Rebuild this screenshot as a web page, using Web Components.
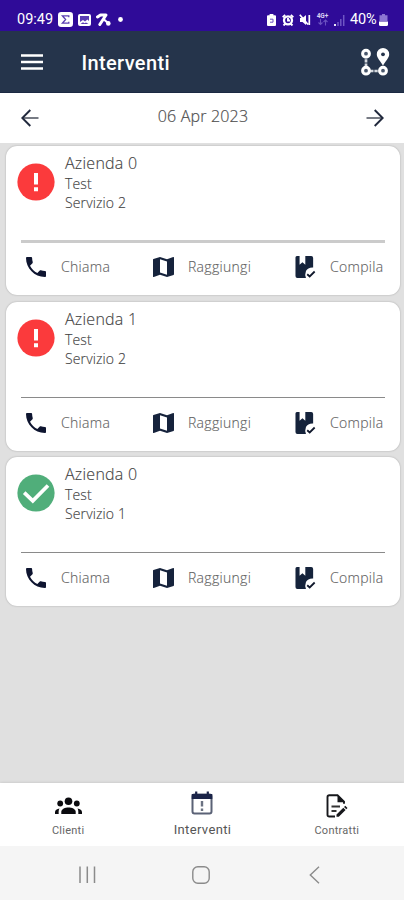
<!DOCTYPE html>
<html lang="it">
<head>
<meta charset="utf-8">
<title>Interventi</title>
<style>
html,body{margin:0;padding:0}
body{width:404px;height:900px;overflow:hidden;background:#e0e0e0;font-family:"Open Sans","Noto Sans",sans-serif}
</style>
</head>
<body>
<app-screen></app-screen>
<script>
const define = (name, html, setup) => {
  const t = document.createElement('template');
  t.innerHTML = html;
  customElements.define(name, class extends HTMLElement {
    connectedCallback() {
      if (this.shadowRoot) return;
      const root = this.attachShadow({mode: 'open'});
      root.append(t.content.cloneNode(true));
      if (setup) setup(this, root);
    }
  });
};

/* Each icon: width, height, viewBox, markup */
const ICONS = {
  sigma: [15,15,'0 0 15 15','<rect width="15" height="15" rx="3.2" fill="#fff"/><path d="M10.800 5.200V3.800H4.400L7.600 7.500 4.400 11.200h6.400V9.800" fill="none" stroke="#5c40b2" stroke-width="1.300"/>'],
  picture: [13,12,'0 0 13 12','<rect width="13" height="12" rx="2" fill="#fff"/><path d="M2 2h9v5L9.500 5.500 7 7.500 5 6 2 8z" fill="#5a3bb4"/><path d="M2.500 10h8L8 8.500 6.500 9.300 5 8.300z" fill="#5a3bb4"/>'],
  percent: [15,13,'0 0 15 13','<path d="M1.500 4L4.500 2h5.500L3.800 11.500" fill="none" stroke="#fff" stroke-width="3" stroke-linejoin="round" stroke-linecap="round"/><path d="M8 6.500l4 3.500" stroke="#fff" stroke-width="2.200" stroke-linecap="round"/><circle cx="12.300" cy="10.400" r="2.300" fill="#fff"/>'],
  dot: [5,5,'0 0 5 5','<circle cx="2.500" cy="2.500" r="2.400" fill="#fff"/>'],
  saver: [9,12,'0 0 9 12','<path d="M2.600 0h3.800v1.300H8q1 0 1 1V11q0 1-1 1H1q-1 0-1-1V2.300q0-1 1-1h1.600z" fill="#fff"/><path d="M3 5.200h3v3H3" fill="none" stroke="#6a4fc0" stroke-width="1"/>'],
  alarm: [12,12,'0 0 12 12','<circle cx="6" cy="6.300" r="4" fill="none" stroke="#fff" stroke-width="2.300"/><path d="M.7 3.200L3.200.9M11.300 3.200L8.800.9M1.500 11.500l2-2M10.500 11.500l-2-2M6 4v2.500h2" fill="none" stroke="#fff" stroke-width="1.900"/>'],
  mute: [12,12,'0 0 12 12','<path d="M1 4h2.500L7 1v10L3.500 8H1z" fill="#fff"/><path d="M.8.8L9 10.500M10.300 1v10" fill="none" stroke="#fff" stroke-width="1.700"/>'],
  net: [13,7,'0 0 13 7','<path d="M4.500 0v5.500M2.500 3.500l2 2 2-2M9.500 6.500V1M7.500 3l2-2 2 2" fill="none" stroke="#6a50c0" stroke-width="1.100"/>'],
  signal: [11,12,'0 0 11 12','<path d="M1 10v2" stroke="#fff" stroke-width="1.800"/><path d="M4 8v4M6.800 5v7M9.700 1v11" stroke="#6f56c4" stroke-width="1.500"/>'],
  battery: [9,12,'0 0 9 12','<path d="M3 0h3v1.200H8.500V7H.5V1.200H3z" fill="#8c76d2"/><path d="M0 7.500h9v3q0 1.500-1.500 1.500h-6Q0 12 0 10.500z" fill="#fff"/>'],
  menu: [22,16,'0 0 22 16','<path d="M0 1.500h22M0 8h22M0 14.500h22" stroke="#fff" stroke-width="2.300"/>'],
  route: [30,30,'0 0 30 30','<path d="M6 8v15M6 24h18" stroke="#d5d9df" stroke-width="2.700" stroke-dasharray="3.300 .9"/><g fill="#4a586d" stroke="#fff" stroke-width="3"><circle cx="6" cy="6.700" r="3.400"/><circle cx="6" cy="23.700" r="3.400"/><circle cx="23" cy="23.700" r="3.400"/></g><path d="M23 1a6.200 6.200 0 0 0-6.200 6.200c0 4 3.800 6.500 6.200 11.500 2.400-5 6.200-7.500 6.200-11.500A6.200 6.200 0 0 0 23 1z" fill="#fff"/><circle cx="23" cy="7.300" r="1.900" fill="#25344b"/>'],
  left: [18,18,'0 0 18 18','<path d="M17.500 9H2" stroke="#777b84" stroke-width="2"/><path d="M9.300 1L1.300 9l8 8" fill="none" stroke="#20283c" stroke-width="1.900"/>'],
  right: [18,18,'0 0 18 18','<path d="M.5 9H16" stroke="#777b84" stroke-width="2"/><path d="M8.700 1l8 8-8 8" fill="none" stroke="#20283c" stroke-width="1.900"/>'],
  error: [38,38,'0 0 38 38','<circle cx="19" cy="19" r="18.600" fill="#fb3a3c"/><path d="M19 10v11.500M19 24.300v3.900" stroke="#fff" stroke-width="4"/>'],
  done: [38,38,'0 0 38 38','<circle cx="19" cy="19" r="18.600" fill="#50ae7a"/><path d="M7.200 18.600l8.600 8.200L31 11.500" fill="none" stroke="#fff" stroke-width="3.700"/>'],
  phone: [20,20,'3 3 18 18','<path fill="#0e1530" d="M6.620 10.790c1.440 2.830 3.760 5.140 6.590 6.590l2.200-2.200c.27-.27.67-.36 1.020-.24 1.120.37 2.330.57 3.570.57.55 0 1 .45 1 1V20c0 .55-.45 1-1 1-9.390 0-17-7.610-17-17 0-.55.45-1 1-1h3.500c.55 0 1 .45 1 1 0 1.250.2 2.450.57 3.570.11.35.03.74-.25 1.020l-2.200 2.200z"/>'],
  map: [21,20,'3 3 18 18','<path fill="#16233c" d="M20.500 3l-.16.030L15 5.100 9 3 3.360 4.900c-.21.070-.36.250-.36.480V20.500c0 .28.220.5.500.5l.16-.03L9 18.900l6 2.100 5.640-1.900c.21-.07.360-.25.360-.48V3.500c0-.28-.22-.5-.5-.5z"/><path fill="#fff" d="M9 5l6 2.100V19l-6-2.100z"/>'],
  book: [21,24,'0 0 22 24','<path d="M2 1h2.800v8.800l3-2.600 3 2.600V1H17q2 0 2 2v9.500q-5.500-.3-7.500 3.500-1.500 3.500 0 7H2.500q-2 0-2-2V2.500Q.5 1 2 1z" fill="#15233b"/><path d="M12.800 19.200l2.600 2.300 5.200-5" fill="none" stroke="#10182c" stroke-width="1.900"/>'],
  people: [27,18,'0 0 27 18','<g fill="#0b0b0f"><circle cx="13.500" cy="4.200" r="3.800"/><circle cx="5.200" cy="6.500" r="2.900"/><circle cx="21.800" cy="6.500" r="2.900"/><path d="M6.300 17v-2.200c0-2.800 4-4.300 7.200-4.300s7.200 1.500 7.200 4.300V17z"/><path d="M0 17v-1.800c0-2 1.800-3.400 4.600-3.700-.8 1-1.100 2.200-.9 5.500zM27 17v-1.800c0-2-1.800-3.400-4.600-3.700.8 1 1.100 2.200.9 5.500z"/></g>'],
  calendar: [22,24,'0 0 22 24','<rect x="1.500" y="3.500" width="19" height="19" rx="2" fill="#fff" stroke="#5b6276" stroke-width="2"/><path d="M.7 3h20.600v5H.7z" fill="#1b2448"/><path d="M5.200.5v4M16.800.5v4" stroke="#1b2448" stroke-width="2.200"/><path d="M11 10v5.500M11 17.500v2.500" stroke="#6b7282" stroke-width="2.400"/>'],
  contract: [22,24,'0 0 22 24','<path d="M9 22.500H3.300q-1.800 0-1.800-1.800V3q0-1.800 1.800-1.800h8.200L18 7.700v2" fill="none" stroke="#17181c" stroke-width="1.900"/><path d="M11.500 1v7.200H18.500z" fill="#17181c"/><path d="M5.500 12.500h8.500M5.500 17h5" stroke="#333" stroke-width="1.900"/><path d="M10.500 22.800v-2.300l6.800-6.800 2.300 2.300-6.800 6.800zM18 13l1.300-1.200 2.200 2.200-1.200 1.300z" fill="#17181c"/>'],
  recents: [18,18,'0 0 18 18','<path d="M2 .5v16.500M9.300 .5v16.500M16.500 .5v16.500" stroke="#8b8b8b" stroke-width="1.500"/>'],
  home: [18,18,'0 0 18 18','<rect x=".8" y=".8" width="16.400" height="16.400" rx="5" fill="none" stroke="#8b8b8b" stroke-width="1.400"/>'],
  back: [11,18,'0 0 11 18','<path d="M10 .8L1.300 9l8.700 8.200" fill="none" stroke="#8b8b8b" stroke-width="1.400"/>']
};

define('ui-icon', '<style>:host{display:block;flex:none;line-height:0}svg{display:block}</style>', (el, root) => {
  const [w, h, box, body] = ICONS[el.getAttribute('name')];
  root.innerHTML += `<svg width="${w}" height="${h}" viewBox="${box}" preserveAspectRatio="none">${body}</svg>`;
});

define('status-bar', `<style>
:host{display:flex;box-sizing:border-box;height:31px;padding:8px 15px 0 17px;background:#2f0b98;color:#fff;font:14.500px/22px Roboto,sans-serif;align-items:center;justify-content:space-between}
div{display:flex;align-items:center}
.l{gap:5px}.l>span{width:36px}.r{gap:4px}
.net{display:flex;flex-direction:column;align-items:center;width:13px;font-size:6.500px;line-height:6px;font-weight:700;margin:0 1px;color:#d8d0f2}
.pct{letter-spacing:-.2px;width:27px;margin-left:1px;margin-right:-2px}
ui-icon[name=dot]{margin-left:2px}
</style>
<div class="l"><span>09:49</span><ui-icon name="sigma"></ui-icon><ui-icon name="picture"></ui-icon><ui-icon name="percent"></ui-icon><ui-icon name="dot"></ui-icon></div>
<div class="r"><ui-icon name="saver"></ui-icon><ui-icon name="alarm" style="margin-left:2px"></ui-icon><ui-icon name="mute" style="margin-left:1px"></ui-icon><div class="net"><span>4G+</span><ui-icon name="net"></ui-icon></div><ui-icon name="signal"></ui-icon><span class="pct">40%</span><ui-icon name="battery" style="margin-right:1px"></ui-icon></div>`);

define('app-header', `<style>
:host{display:flex;box-sizing:border-box;height:62px;padding:0 14px 0 21px;align-items:center;background:#25344b;border-bottom:1px solid #1b2942}
h1{flex:1;margin:2px 0 0 38.500px;font:500 20px/24px Roboto,sans-serif;letter-spacing:.36px;color:#fff}
</style><ui-icon name="menu"></ui-icon><h1><slot></slot></h1><ui-icon name="route"></ui-icon>`);

define('date-picker', `<style>
:host{display:flex;box-sizing:border-box;height:50px;padding:0 20px 0 21px;align-items:center;justify-content:space-between;background:#fff}
span{font-size:16px;line-height:22px;color:#4c4c4c;font-weight:300;letter-spacing:.18px;margin:-4px 0 0 1px;-webkit-text-stroke:.2px #555}
</style><ui-icon name="left"></ui-icon><span><slot></slot></span><ui-icon name="right"></ui-icon>`);

define('card-action', `<style>
:host{display:flex;align-items:center;gap:14px;font-size:14px;font-weight:300;line-height:20px;letter-spacing:.3px;color:#5a5a5a;-webkit-text-stroke:.15px #777}
</style><slot name="icon"></slot><span><slot></slot></span>`);

define('job-card', `<style>
:host{display:block;box-sizing:border-box;height:149px;background:#fff;border-radius:11px;box-shadow:0 0 2px rgba(0,0,0,.28);padding:7px 15px 0 11px}
.top{display:flex;height:88px;gap:10px}
.top>slot::slotted(*){margin-top:10px}
.text{font-weight:300;font-size:14px;line-height:19.400px;letter-spacing:.12px;color:#3c3c3c;-webkit-text-stroke:.15px #555}
h2{margin:0;font-size:16px;line-height:21px;font-weight:300;letter-spacing:.25px}
hr{margin:0 0 0 4px;border:0;height:1px;background:#8a8a8a}
:host([soft]) hr{height:3px;margin-top:-1px;margin-bottom:-1px;background:#cbcbcb}
.actions{display:grid;grid-template-columns:127px 142px auto;margin:11px -8px 0 9px;height:28px;align-items:center}
card-action:first-child{gap:15px}
</style>
<div class="top"><slot name="status"></slot><div class="text"><h2><slot name="company"></slot></h2><div><slot name="kind"></slot></div><div><slot name="service"></slot></div></div></div>
<hr>
<div class="actions">
<card-action><ui-icon slot="icon" name="phone"></ui-icon>Chiama</card-action>
<card-action><ui-icon slot="icon" name="map"></ui-icon>Raggiungi</card-action>
<card-action><ui-icon slot="icon" name="book"></ui-icon>Compila</card-action>
</div>`);

define('tab-item', `<style>
:host{display:flex;flex-direction:column;align-items:center;font:11px/14px Roboto,sans-serif;letter-spacing:.25px;color:#666;padding-top:11px;gap:6px}
:host([active]){font-size:13px;letter-spacing:.35px;color:#555;padding-top:8px;gap:8px}
.i{height:24px;display:flex;align-items:center}
</style><div class="i"><slot name="icon"></slot></div><span><slot></slot></span>`);

define('tab-bar', `<style>
:host{display:grid;grid-template-columns:repeat(3,1fr);box-sizing:border-box;height:63px;background:#fff;box-shadow:0 0 3px rgba(0,0,0,.15);padding:0 0 0 1px}
</style><slot></slot>`);

define('system-nav', `<style>
:host{display:flex;box-sizing:border-box;height:54px;background:#f5f5f5;padding:3px 84px 0 78px;align-items:center;justify-content:space-between}
ui-icon[name=home]{margin:0 4px 0 0}
</style><ui-icon name="recents"></ui-icon><ui-icon name="home"></ui-icon><ui-icon name="back"></ui-icon>`);

const card = (icon, company, service, soft) =>
  `<job-card ${soft ? 'soft' : ''}><ui-icon slot="status" name="${icon}"></ui-icon><span slot="company">${company}</span><span slot="kind">Test</span><span slot="service">${service}</span></job-card>`;

define('app-screen', `<style>
:host{display:flex;flex-direction:column;width:404px;height:900px;background:#e0e0e0}
main{flex:1;display:flex;flex-direction:column;gap:6.500px;padding:3px 4px 0 6px}
</style>
<status-bar></status-bar>
<app-header>Interventi</app-header>
<date-picker>06 Apr 2023</date-picker>
<main>${card('error','Azienda 0','Servizio 2',true)}${card('error','Azienda 1','Servizio 2')}${card('done','Azienda 0','Servizio 1')}</main>
<tab-bar><tab-item><ui-icon slot="icon" name="people"></ui-icon>Clienti</tab-item><tab-item active><ui-icon slot="icon" name="calendar"></ui-icon>Interventi</tab-item><tab-item><ui-icon slot="icon" name="contract"></ui-icon>Contratti</tab-item></tab-bar>
<system-nav></system-nav>`);
</script>
</body>
</html>
